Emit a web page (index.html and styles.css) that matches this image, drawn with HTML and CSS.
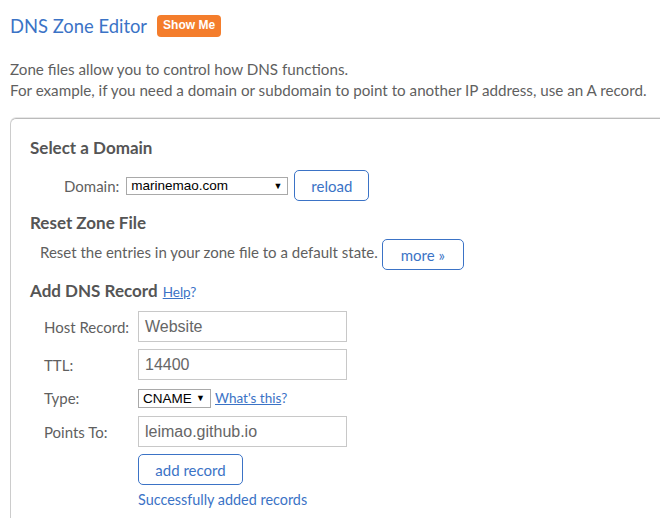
FILE: index.html
```html
<!DOCTYPE html>
<html>
<head>
<meta charset="utf-8">
<link rel="stylesheet" href="styles.css">
</head>
<body>
<div class="page">
  <div class="header">
    <h1 class="title">DNS Zone Editor</h1>
    <span class="badge">Show Me</span>
  </div>
  <p class="intro">Zone files allow you to control how DNS functions.<br>For example, if you need a domain or subdomain to point to another IP address, use an A record.</p>
  <div class="box">
    <h2 class="section">Select a Domain</h2>
    <div class="domain-row">
      <span class="label">Domain:</span>
      <div class="select domain-select"><span>marinemao.com</span><span class="arrow">▼</span></div>
      <button class="btn reload">reload</button>
    </div>
    <h2 class="section">Reset Zone File</h2>
    <div class="reset-row">
      <span class="label">Reset the entries in your zone file to a default state.</span>
      <button class="btn more">more »</button>
    </div>
    <h2 class="section add">Add DNS Record <a class="link help">Help</a><span class="q">?</span></h2>
    <div class="grid">
      <span class="label">Host Record:</span>
      <div class="input">Website</div>
      <span class="label">TTL:</span>
      <div class="input">14400</div>
      <span class="label">Type:</span>
      <div class="type-cell"><div class="select type-select"><span>CNAME</span><span class="arrow">▼</span></div><a class="link whats">What's this</a><span class="q">?</span></div>
      <span class="label">Points To:</span>
      <div class="input">leimao.github.io</div>
      <span></span>
      <div class="actions"><button class="btn add-btn">add record</button><div class="success">Successfully added records</div></div>
    </div>
  </div>
</div>
</body>
</html>
```

FILE: styles.css
```css
* { box-sizing: border-box; }
html, body { margin: 0; padding: 0; background: #fff; }
body { font-family: Lato, "Open Sans", sans-serif; color: #555; }
.page { padding: 0 0 0 10px; width: 680px; }
.header { display: flex; align-items: center; height: 50px; padding-top: 1px; }
.title { margin: 0; font-size: 18.4px; font-weight: 400; color: #3b73c6; }
.badge { margin-left: 10px; background: #f47d2c; color: #fff; font-family: "Liberation Sans", Arial, sans-serif; font-weight: 700; font-size: 12px; border-radius: 4px; padding: 3px 6px 4px; line-height: 15px; margin-top: 1px; }
.intro { margin: 9px 0 0; font-size: 15.2px; line-height: 21px; color: #5f5f5f; }
.box { margin-top: 17px; border: 1px solid #ccc; border-top-color: #bbb; border-right: none; border-bottom: none; border-top-left-radius: 6px; padding: 19px 0 20px 19px; box-shadow: 0 -1px 0 #e8e8e8; }
.section { margin: 0; font-size: 17px; font-weight: 700; color: #555; line-height: 20px; }
.label { font-size: 15px; color: #5f5f5f; }
.domain-row { display: flex; align-items: center; padding-left: 34px; margin-top: 12px; }
.domain-row .label { margin-right: 7px; }
.select { display: flex; align-items: center; justify-content: space-between; border: 1px solid #a9a9a9; background: #fff; font-family: "Liberation Sans", Arial, sans-serif; font-size: 13.5px; color: #000; padding: 0 5px 0 4px; height: 18px; }
.arrow { font-size: 9px; }
.domain-select { width: 162px; }
.btn { font-family: Lato, "Open Sans", sans-serif; font-size: 15px; color: #3b73c6; background: #fff; border: 1px solid #3b73c6; border-radius: 5px; height: 31px; padding: 0; }
.reload { width: 75px; margin-left: 6px; }
.domain-row + .section { margin-top: 12px; }
.reset-row { display: flex; align-items: flex-end; padding-left: 10px; margin-top: 6px; }
.reset-row .label { padding-bottom: 9px; }
.more { width: 82px; margin-left: 4px; }
.add { margin-top: 11px; }
.link { color: #3b73c6; text-decoration: underline; font-weight: 400; font-size: 13.5px; }
.q { font-weight: 400; font-size: 13.5px; color: #3b73c6; }
.help { margin-left: 1px; }
.grid { display: grid; grid-template-columns: 94px 209px; column-gap: 0; row-gap: 7px; padding-left: 14px; margin-top: 9px; align-items: center; }
.input { height: 31px; border: 1px solid #c8c8c8; font-family: "Liberation Sans", Arial, sans-serif; font-size: 16px; color: #666; padding: 0 6px; display: flex; align-items: center; }
.type-cell { display: flex; align-items: center; height: 22px; }
.type-select { width: 73px; height: 19px; font-size: 13.5px; }
.whats { margin-left: 4px; }
.actions { margin-top: 0; }
.add-btn { width: 105px; }
.success { color: #3b73c6; font-size: 14.4px; margin-top: 6px; }
```
